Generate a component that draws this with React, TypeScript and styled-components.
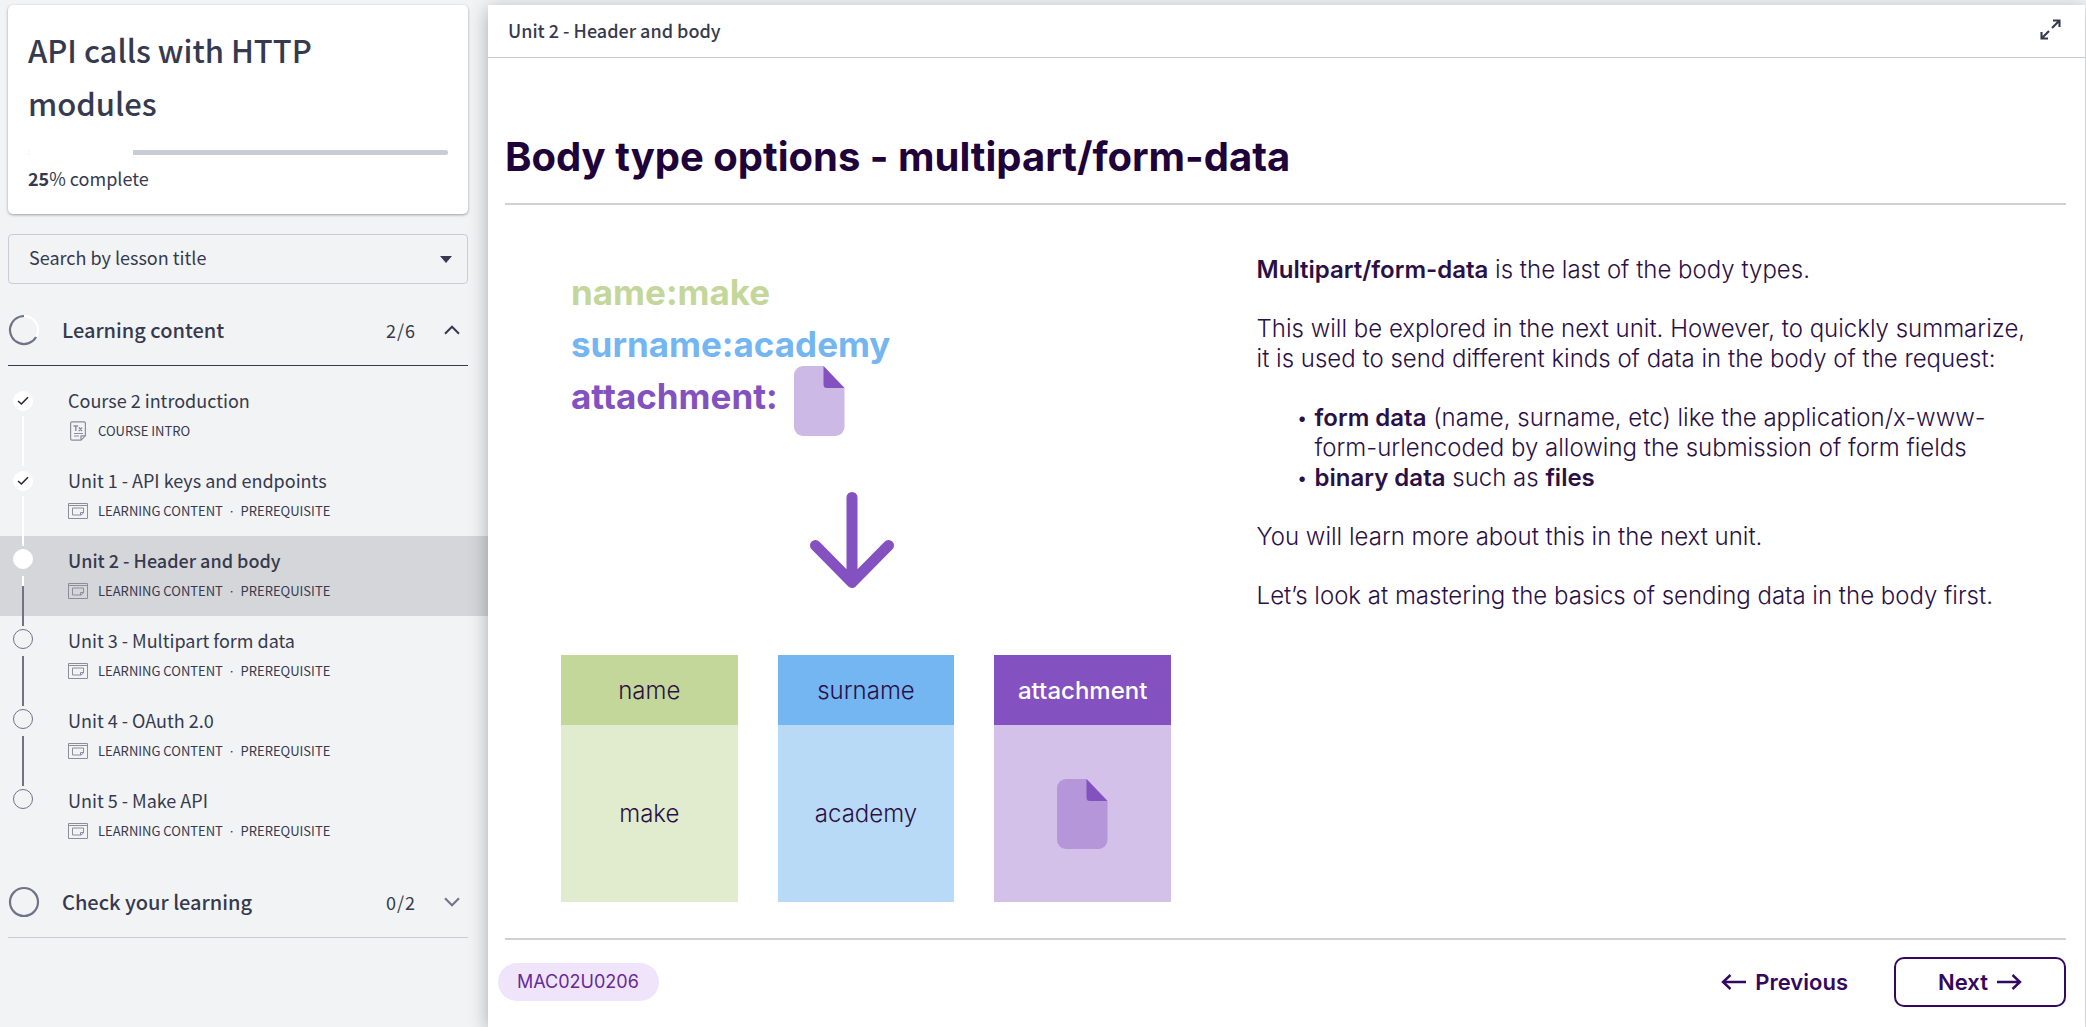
import React from "react";
import styled, { createGlobalStyle } from "styled-components";

const SANS = `"Noto Sans CJK SC", "Noto Sans", sans-serif`;
const SLIDE = `Inter, "Liberation Sans", sans-serif`;

const GlobalStyle = createGlobalStyle`
  *, *::before, *::after { box-sizing: border-box; }
  body { margin: 0; background: #f1f3f5; color: #363a4f; font-family: ${SANS}; }
  h1, h2, p, ul, ol { margin: 0; padding: 0; }
  button, select { font: inherit; color: inherit; }
  svg { display: block; flex: none; }
`;

const Page = styled.div`
  display: grid;
  grid-template-columns: 488px minmax(0, 1fr);
  min-height: 100vh;
  overflow: hidden;
`;

/* ---------- Sidebar ---------- */

const Sidebar = styled.aside`
  padding-top: 5px;
`;

const CourseCard = styled.section`
  margin: 0 20px 20px 8px;
  padding: 18px 20px 19px;
  background: #fff;
  border-radius: 5px;
  box-shadow: 0 1px 3px rgba(0, 0, 0, 0.35);
`;

const CourseTitle = styled.h1`
  padding-right: 40px;
  font-size: 31px;
  font-weight: 500;
  line-height: 53px;
`;

const ProgressTrack = styled.div`
  height: 5px;
  margin-top: 21px;
  border-radius: 3px;
  background: #c9cbd7;
  overflow: hidden;
`;

const ProgressFill = styled.div`
  height: 100%;
  background: #fff;
`;

const ProgressText = styled.p`
  margin-top: 7px;
  font-size: 18px;
  font-weight: 400;
  line-height: 33px;

  b {
    font-weight: 700;
  }
`;

const SearchBox = styled.label`
  display: grid;
  align-items: center;
  margin: 0 20px 11px 8px;
`;

const SearchSelect = styled.select`
  grid-area: 1 / 1;
  height: 50px;
  padding: 0 40px 4px 20px;
  border: 1px solid #c9cbd7;
  border-radius: 4px;
  background: transparent;
  appearance: none;
  font-size: 18px;
  font-weight: 400;
`;

const Caret = styled.span`
  grid-area: 1 / 1;
  justify-self: end;
  margin-right: 16px;
  border: 6px solid transparent;
  border-top: 7px solid #363a4f;
  border-bottom: 0;
  pointer-events: none;
`;

const SectionToggle = styled.button<{ $open?: boolean }>`
  display: grid;
  grid-template-columns: 54px 1fr auto 52px;
  align-items: center;
  width: calc(100% - 28px);
  height: 71px;
  margin: 0 20px 10px 8px;
  padding: 0;
  border: 0;
  border-bottom: 1px solid ${(p) => (p.$open ? "#363a4f" : "#c9cbcf")};
  background: none;
  line-height: 30px;
  text-align: left;
  cursor: pointer;

  svg:last-child {
    justify-self: end;
    margin-right: 8px;
  }
`;

const SectionName = styled.span`
  font-size: 20px;
  font-weight: 500;
`;

const SectionCount = styled.span`
  font-size: 18px;
  font-weight: 400;
  letter-spacing: 1px;
`;

const LessonList = styled.ol`
  list-style: none;
  margin-bottom: 11px;
`;

const Lesson = styled.li<{ $active?: boolean }>`
  height: 80px;
  background: ${(p) => (p.$active ? "#d5d6da" : "transparent")};
  font-weight: ${(p) => (p.$active ? 500 : 400)};
`;

const LessonLink = styled.a`
  display: grid;
  grid-template-columns: 55px 1fr;
  padding-left: 13px;
  color: inherit;
  text-decoration: none;
`;

const Rail = styled.span<{ $done?: boolean }>`
  position: relative;
  z-index: 1;
  display: flex;
  flex-direction: column;
  justify-content: space-between;
  align-items: center;
  width: 20px;
  height: 90px;
  margin-bottom: -10px;
  padding-top: ${(p) => (p.$done ? 15 : 13)}px;
`;

const Dot = styled.span<{ $filled?: boolean }>`
  display: grid;
  place-items: center;
  width: 20px;
  height: 20px;
  border-radius: 50%;
  border: 1px solid ${(p) => (p.$filled ? "#fff" : "#6f7387")};
  background: ${(p) => (p.$filled ? "#fff" : "transparent")};
`;

const LINES = {
  done: "#fff",
  current: "linear-gradient(#fff 10px, #6f7387 10px)",
  todo: "#6f7387",
};

const Connector = styled.span<{ $state: keyof typeof LINES }>`
  width: 2px;
  height: 50px;
  background: ${(p) => LINES[p.$state]};
`;

const LessonText = styled.span`
  display: block;
  padding-top: 10px;
`;

const LessonTitle = styled.span`
  display: block;
  font-size: 18px;
  line-height: 28px;
`;

const LessonMeta = styled.span`
  display: grid;
  grid-template-columns: 30px 1fr;
  align-items: center;
  margin-top: 3px;
  font-size: 13px;
  font-weight: 400;
  line-height: 28px;
`;

const Separator = styled.span`
  padding: 0 4px;
  font-family: ${SLIDE};
`;

/* ---------- Main panel ---------- */

const Panel = styled.main`
  display: flex;
  flex-direction: column;
  margin: 5px 1px 0 0;
  background: #fff;
  box-shadow: 0 4px 18px rgba(0, 0, 0, 0.3);
`;

const PanelHeader = styled.header`
  display: flex;
  align-items: center;
  justify-content: space-between;
  height: 53px;
  padding: 0 20px 3px;
  border-bottom: 1px solid #c9c9d1;
  font-size: 18px;
  font-weight: 500;
`;

const IconButton = styled.button`
  padding: 4px;
  border: 0;
  background: none;
  cursor: pointer;
`;

const Slide = styled.article`
  display: flex;
  flex-direction: column;
  flex: 1;
  padding: 71px 19px 0 17px;
  font-family: ${SLIDE};
  color: #2b1045;
`;

const SlideTitle = styled.h2`
  padding-bottom: 19px;
  border-bottom: 2px solid #d5cfd1;
  color: #20023a;
  font-size: 40px;
  font-weight: 700;
  line-height: 55px;
`;

const SlideBody = styled.div`
  display: grid;
  grid-template-columns: 13fr 14fr;
  flex: 1;
`;

const Diagram = styled.div`
  display: flex;
  flex-direction: column;
  width: 610px;
  margin: 61px 0 36px 56px;
`;

const Pairs = styled.div`
  display: flex;
  flex-direction: column;
  height: 173px;
  padding-left: 10px;
  font-size: 35px;
  font-weight: 700;
  line-height: 52px;
`;

const Pair = styled.p<{ $color: string }>`
  display: flex;
  gap: 16px;
  height: 52px;
  color: ${(p) => p.$color};

  svg {
    margin-top: -4px;
  }
`;

const ArrowSlot = styled.div`
  display: flex;
  justify-content: center;
  padding: 53px 28px 66px 0;
`;

const Cards = styled.div`
  display: grid;
  grid-template-columns: repeat(3, 1fr);
  gap: 40px;
`;

const Card = styled.div<{ $bg: string }>`
  background: ${(p) => p.$bg};
  font-size: 24px;
  font-weight: 300;
`;

const CardHead = styled.div<{ $bg: string; $light?: boolean }>`
  display: grid;
  place-items: center;
  height: 70px;
  background: ${(p) => p.$bg};
  color: ${(p) => (p.$light ? "#fff" : "inherit")};
  font-weight: ${(p) => (p.$light ? 500 : 300)};
`;

const CardBody = styled.div`
  display: grid;
  place-items: center;
  height: 177px;
`;

const Notes = styled.div`
  display: flex;
  flex-direction: column;
  gap: 29px;
  padding: 50px 22px 0 0;
  font-size: 24px;
  font-weight: 300;
  line-height: 30px;

  b {
    font-weight: 600;
  }
`;

const Bullets = styled.ul`
  padding-left: 40px;
  list-style: none;
`;

const Bullet = styled.li`
  display: grid;
  grid-template-columns: 18px 1fr;

  &::before {
    content: "•";
    font-size: 20px;
  }
`;

const SlideFooter = styled.footer`
  display: flex;
  align-items: center;
  height: 89px;
  padding-bottom: 4px;
  border-top: 2px solid #d5cfd1;
`;

const Code = styled.span`
  margin: 0 auto 0 -7px;
  padding: 0 20px 0 19px;
  border-radius: 19px;
  background: #f0e4fb;
  color: #652b98;
  font-size: 18px;
  line-height: 38px;
`;

const NavButton = styled.button<{ $outlined?: boolean }>`
  display: flex;
  align-items: center;
  justify-content: center;
  gap: 8px;
  height: 50px;
  min-width: ${(p) => (p.$outlined ? 172 : 0)}px;
  margin-left: ${(p) => (p.$outlined ? 46 : 0)}px;
  padding: 0;
  border: ${(p) => (p.$outlined ? "2px solid #35085f" : "0")};
  border-radius: 10px;
  background: none;
  color: #35085f;
  font-size: 22px;
  font-weight: 600;
  cursor: pointer;
`;

/* ---------- Icons ---------- */

const CheckIcon = () => (
  <svg width="12" height="10" viewBox="0 0 12 10" fill="none" stroke="#26282f" strokeWidth="1.6">
    <path d="M1 5l3.4 3L11 1.2" />
  </svg>
);

const TextPageIcon = () => (
  <svg width="20" height="20" viewBox="0 0 20 20" fill="none" stroke="#8b8e9c" strokeWidth="1.2">
    <path d="M4 .8h12a1.4 1.4 0 0 1 1.4 1.4v12.6L13 19.2H4a1.4 1.4 0 0 1-1.4-1.4V2.2A1.4 1.4 0 0 1 4 .8zM17.4 14.8H13v4.4M6 12.5h9M6 15h5" />
    <path d="M5.5 5h4.6M7.8 5v5M10.8 6.5l3.2 3.5M14 6.5L10.8 10" strokeWidth="1.4" />
  </svg>
);

const WindowIcon = () => (
  <svg width="20" height="16" viewBox="0 0 20 16" fill="none" stroke="#8b8e9c">
    <path d="M.5.5h19v15H.5zM.5 2.5h19M15.5 10V5h-11v7h8.500zM12.500 12v-2.500h3" />
  </svg>
);

const ProgressRing = ({ started }: { started?: boolean }) => (
  <svg width="32" height="32" viewBox="0 0 32 32" fill="none" strokeWidth="2.2">
    <circle cx="16" cy="16" r="14" stroke={started ? "#fff" : "#6f7387"} />
    {started && <path d="M28.1 23A14 14 0 1 1 16 2" stroke="#6f7387" />}
  </svg>
);

const Chevron = ({ up }: { up?: boolean }) => (
  <svg width="16" height="10" viewBox="0 0 16 10" fill="none" stroke={up ? "#363a4f" : "#6f7387"} strokeWidth="2">
    <path d={up ? "M1 8.7l7-7 7 7" : "M1 1.3l7 7 7-7"} />
  </svg>
);

const ExpandIcon = () => (
  <svg width="21" height="21" viewBox="0 0 21 21" fill="none" stroke="#363a4f" strokeWidth="2.1">
    <path d="M13 1.5h6.5V8M19 2l-7 7M8 19.5H1.5V13M2 19l7-7" />
  </svg>
);

const FileIcon = ({ color }: { color: string }) => (
  <svg width="51" height="70" viewBox="0 0 51 70">
    <path d="M9 0h20.500L50.500 22v39a9 9 0 0 1-9 9H9a9 9 0 0 1-9-9V9a9 9 0 0 1 9-9z" fill={color} />
    <path d="M29.500 0L50.500 22H33a3.500 3.500 0 0 1-3.500-3.500z" fill="#8451c0" />
  </svg>
);

const DownArrow = () => (
  <svg width="84" height="97" viewBox="0 0 84 97" fill="none" stroke="#8451c0" strokeWidth="11" strokeLinecap="round" strokeLinejoin="round">
    <path d="M42 5.500v84M5.500 53.500L42 90.500l36.500-37" />
  </svg>
);

const NavArrow = ({ right }: { right?: boolean }) => (
  <svg width="26" height="16" viewBox="0 0 26 16" fill="none" stroke="#35085f" strokeWidth="2.4">
    <path d={right ? "M1 8h23M16.500 1l7.500 7-7.500 7" : "M25 8H2M9.500 1L2 8l7.500 7"} />
  </svg>
);

/* ---------- Data ---------- */

type State = "done" | "current" | "todo";

const lessons: { title: string; kind: string; required?: boolean; state: State }[] = [
  { title: "Course 2 introduction", kind: "COURSE INTRO", state: "done" },
  { title: "Unit 1 - API keys and endpoints", kind: "LEARNING CONTENT", required: true, state: "done" },
  { title: "Unit 2 - Header and body", kind: "LEARNING CONTENT", required: true, state: "current" },
  { title: "Unit 3 - Multipart form data", kind: "LEARNING CONTENT", required: true, state: "todo" },
  { title: "Unit 4 - OAuth 2.0", kind: "LEARNING CONTENT", required: true, state: "todo" },
  { title: "Unit 5 - Make API", kind: "LEARNING CONTENT", required: true, state: "todo" },
];

const progress = 25;

export default function App() {
  return (
    <>
      <GlobalStyle />
      <Page>
        <Sidebar>
          <CourseCard>
            <CourseTitle>API calls with HTTP modules</CourseTitle>
            <ProgressTrack role="progressbar" aria-label="Course progress" aria-valuenow={progress}>
              <ProgressFill style={{ width: `${progress}%` }} />
            </ProgressTrack>
            <ProgressText>
              <b>{progress}</b>% complete
            </ProgressText>
          </CourseCard>

          <SearchBox>
            <SearchSelect aria-label="Search by lesson title">
              <option>Search by lesson title</option>
            </SearchSelect>
            <Caret />
          </SearchBox>

          <SectionToggle $open aria-expanded="true">
            <ProgressRing started />
            <SectionName>Learning content</SectionName>
            <SectionCount>2/6</SectionCount>
            <Chevron up />
          </SectionToggle>

          <LessonList>
            {lessons.map((l, i) => (
              <Lesson key={l.title} $active={l.state === "current"}>
                <LessonLink href="#">
                  <Rail $done={l.state === "done"}>
                    <Dot $filled={l.state !== "todo"}>{l.state === "done" && <CheckIcon />}</Dot>
                    {i < lessons.length - 1 && <Connector $state={l.state} />}
                  </Rail>
                  <LessonText>
                    <LessonTitle>{l.title}</LessonTitle>
                    <LessonMeta>
                      {l.required ? <WindowIcon /> : <TextPageIcon />}
                      <span>
                        {l.kind}
                        {l.required && (
                          <>
                            {" "}
                            <Separator>·</Separator> PREREQUISITE
                          </>
                        )}
                      </span>
                    </LessonMeta>
                  </LessonText>
                </LessonLink>
              </Lesson>
            ))}
          </LessonList>

          <SectionToggle aria-expanded="false">
            <ProgressRing />
            <SectionName>Check your learning</SectionName>
            <SectionCount>0/2</SectionCount>
            <Chevron />
          </SectionToggle>
        </Sidebar>

        <Panel>
          <PanelHeader>
            Unit 2 - Header and body
            <IconButton aria-label="Full screen">
              <ExpandIcon />
            </IconButton>
          </PanelHeader>

          <Slide>
            <SlideTitle>Body type options - multipart/form-data</SlideTitle>
            <SlideBody>
              <Diagram>
                <Pairs>
                  <Pair $color="#c4d79b">name:make</Pair>
                  <Pair $color="#74b6f2">surname:academy</Pair>
                  <Pair $color="#8451c0">
                    attachment:
                    <FileIcon color="#cdb9e6" />
                  </Pair>
                </Pairs>
                <ArrowSlot>
                  <DownArrow />
                </ArrowSlot>
                <Cards>
                  <Card $bg="#e1ebcd">
                    <CardHead $bg="#c4d79b">name</CardHead>
                    <CardBody>make</CardBody>
                  </Card>
                  <Card $bg="#b9daf7">
                    <CardHead $bg="#74b6f2">surname</CardHead>
                    <CardBody>academy</CardBody>
                  </Card>
                  <Card $bg="#d3c1e9">
                    <CardHead $bg="#8451c0" $light>
                      attachment
                    </CardHead>
                    <CardBody>
                      <FileIcon color="#b496d9" />
                    </CardBody>
                  </Card>
                </Cards>
              </Diagram>

              <Notes>
                <p>
                  <b>Multipart/form-data</b> is the last of the body types.
                </p>
                <p>
                  This will be explored in the next unit. However, to quickly summarize, it is used to send
                  different kinds of data in the body of the request:
                </p>
                <Bullets>
                  <Bullet>
                    <span>
                      <b>form data</b> (name, surname, etc) like the application/x-www-form-urlencoded by
                      allowing the submission of form fields
                    </span>
                  </Bullet>
                  <Bullet>
                    <span>
                      <b>binary data</b> such as <b>files</b>
                    </span>
                  </Bullet>
                </Bullets>
                <p>You will learn more about this in the next unit.</p>
                <p>Let’s look at mastering the basics of sending data in the body first.</p>
              </Notes>
            </SlideBody>

            <SlideFooter>
              <Code>MAC02U0206</Code>
              <NavButton>
                <NavArrow />
                Previous
              </NavButton>
              <NavButton $outlined>
                Next
                <NavArrow right />
              </NavButton>
            </SlideFooter>
          </Slide>
        </Panel>
      </Page>
    </>
  );
}
